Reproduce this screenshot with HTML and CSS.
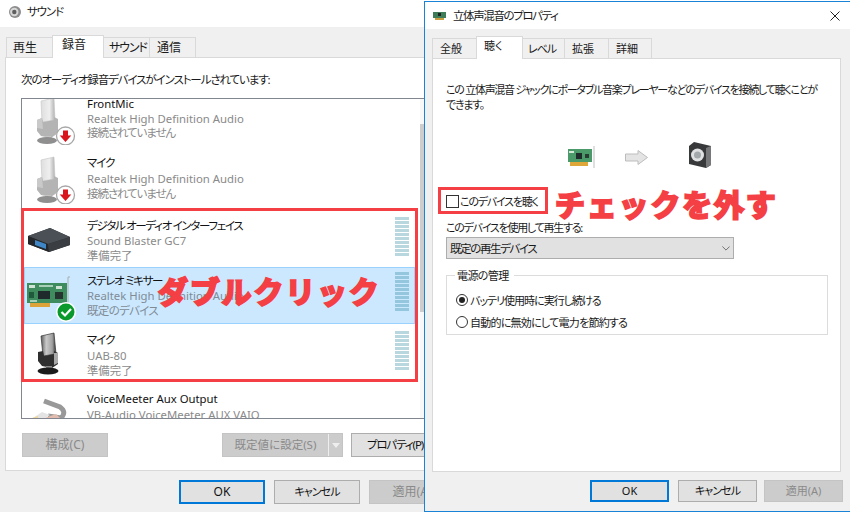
FILE: index.html
```html
<!DOCTYPE html>
<html lang="ja">
<head>
<meta charset="utf-8">
<title>サウンド</title>
<link rel="stylesheet" href="styles.css">
</head>
<body>
<svg class="defs" aria-hidden="true">
  <defs>
    <linearGradient id="capLight" x1="0" x2="1" y1="0" y2="0"><stop offset="0" stop-color="#dedede"/><stop offset=".6" stop-color="#efefef"/><stop offset="1" stop-color="#b0b0b0"/></linearGradient>
    <linearGradient id="capDark" x1="0" x2="1" y1="0" y2="0"><stop offset="0" stop-color="#5a5a5a"/><stop offset=".35" stop-color="#c9c9c9"/><stop offset=".75" stop-color="#a0a0a0"/><stop offset="1" stop-color="#333"/></linearGradient>
    <symbol id="micOff" viewBox="0 0 48 48">
      <path d="M11 4 L24 1 L25 23 L12 25 Z" fill="url(#capLight)" stroke="#c4c4c4" stroke-width=".6"/>
      <path d="M7 23 L12 21 L13 25 L24 23 L24 20 L28 22 L28 36 L21 41 L11 39 L7 34 Z" fill="#b4b4b4"/>
      <path d="M7 23 L12 21 L13 32 L7 31 Z" fill="#c9c9c9"/>
      <rect x="15" y="39" width="6" height="4" fill="#c4c4c4"/>
      <ellipse cx="17" cy="43.500" rx="10" ry="3.500" fill="#8f8f8f"/>
      <circle cx="35.500" cy="39" r="9" fill="#fff" stroke="#a8a8a8" stroke-width="1.300"/>
      <path d="M33 33.500 h5 v5 h3.300 L35.500 45 L29.700 38.500 h3.300 Z" fill="#d8141c"/>
    </symbol>
  </defs>
</svg>

<div class="sound-window">
  <div class="titlebar titlebar-back">
    <svg class="title-icon" viewBox="0 0 14 14" aria-hidden="true">
      <circle cx="7" cy="7" r="6" fill="#8d8d8d"/>
      <circle cx="6.300" cy="7" r="4.200" fill="#d6d6d6"/>
      <circle cx="6.300" cy="7" r="2.200" fill="#5f5f5f"/>
    </svg>
    <span class="tight">サウンド</span>
  </div>
  <div class="tabs tabs-back">
    <div class="tab tab-w47 pad-6">再生</div>
    <div class="tab tab-active tab-w52 pad-9">録音</div>
    <div class="tab tab-w47 pad-5 tight">サウンド</div>
    <div class="tab tab-w47 pad-7">通信</div>
  </div>
  <div class="panel-back">
    <p class="list-caption tight">次のオーディオ録音デバイスがインストールされています:</p>
    <div class="device-list">
      <div class="rows">
        <div class="row row-1">
          <svg class="device-icon" aria-hidden="true"><use href="#micOff"/></svg>
          <div class="device-text"><div>FrontMic</div><div class="sub">Realtek High Definition Audio</div><div class="sub tight">接続されていません</div></div>
        </div>
        <div class="row row-2">
          <svg class="device-icon" aria-hidden="true"><use href="#micOff"/></svg>
          <div class="device-text"><div class="tight">マイク</div><div class="sub">Realtek High Definition Audio</div><div class="sub tight">接続されていません</div></div>
        </div>
        <div class="row row-3">
          <svg class="device-icon" viewBox="0 0 48 48" aria-hidden="true">
            <path d="M-2 18 L20 10 L40 19 L40 27 L19 34 L-2 26 Z" fill="#2e3236"/>
            <path d="M-2 18 L20 10 L40 19 L18 26 Z" fill="#4a5056"/>
            <path d="M-2 18 L18 26 L19 34 L-2 26 Z" fill="#23272b"/>
            <path d="M5 22 L16 26 L16 31 L5 27 Z" fill="#3f86c6"/>
            <path d="M18 26 L40 19 L40 27 L19 34 Z" fill="#3a3e43"/>
          </svg>
          <div class="device-text"><div class="tight name-long">デジタル オーディオ インターフェイス</div><div class="sub">Sound Blaster GC7</div><div class="sub">準備完了</div></div>
          <div class="meter meter-3"><i></i><i></i><i></i><i></i><i></i><i></i><i></i><i></i><i></i><i></i></div>
        </div>
        <div class="row row-4 row-selected">
          <svg class="device-icon" viewBox="0 0 48 48" aria-hidden="true">
            <path d="M38 6 h2 M38 6 v30" stroke="#a9aeb0" stroke-width="1" fill="none"/>
            <rect x="-3" y="12" width="40" height="20" fill="#3f8d5e"/>
            <rect x="8" y="20" width="12" height="8" fill="#1e2a2c"/>
            <rect x="25" y="21" width="8" height="7" fill="#26342f"/>
            <rect x="-1" y="14" width="6" height="3" fill="#cfe3d5"/>
            <rect x="9" y="14" width="14" height="2" fill="#a8d0b8"/>
            <rect x="26" y="15" width="6" height="3" fill="#cfe3d5"/>
            <rect x="-1" y="21" width="5" height="6" fill="#1f5a3c"/>
            <rect x="0" y="29" width="7" height="2" fill="#a8d0b8"/>
            <rect x="0" y="32" width="20" height="4" fill="#dca33a"/>
            <circle cx="36" cy="41" r="10" fill="#fff"/>
            <circle cx="36" cy="41" r="8.500" fill="#0a9a2c"/>
            <path d="M31.500 41 L35 44.500 L41 38" stroke="#fff" stroke-width="2.200" fill="none"/>
          </svg>
          <div class="device-text"><div class="tight name-long">ステレオ ミキサー</div><div class="sub">Realtek High Definition Audio</div><div class="sub tight-soft">既定のデバイス</div></div>
          <div class="meter meter-4"><i></i><i></i><i></i><i></i><i></i><i></i><i></i><i></i><i></i><i></i></div>
        </div>
        <div class="row row-5">
          <svg class="device-icon" viewBox="0 0 48 48" aria-hidden="true">
            <path d="M11 7 L24 4 L26 25 L13 27 Z" fill="url(#capDark)" stroke="#333" stroke-width=".7"/>
            <path d="M8 23 L13 22 L14 27 L24 25 L24 22 L28 24 L28 35 L22 39 L12 37 L8 32 Z" fill="#2f2f2f"/>
            <path d="M24 24 L28 24 L28 34 L24 36 Z" fill="#a9a9a9"/>
            <rect x="16" y="37" width="6" height="4" fill="#8a8a8a"/>
            <ellipse cx="18" cy="42" rx="10.500" ry="3.500" fill="#1b1b1b"/>
          </svg>
          <div class="device-text"><div class="tight">マイク</div><div class="sub">UAB-80</div><div class="sub">準備完了</div></div>
          <div class="meter meter-5"><i></i><i></i><i></i><i></i><i></i><i></i><i></i><i></i><i></i><i></i></div>
        </div>
        <div class="row row-6">
          <svg class="device-icon" viewBox="0 0 48 48" aria-hidden="true">
            <path d="M14 13 L30 19 Q37 24 31 30 L18 28" stroke="#999" stroke-width="5" fill="none"/>
            <path d="M0 32 L12 24 L20 27 L10 33 Z" fill="#e4e4e4"/>
            <path d="M12 31 L26 26 L32 32 Z" fill="#e2bcae"/>
            <path d="M-1 31 L8 28 L8 33 Z" fill="#eed79a"/>
          </svg>
          <div class="device-text"><div>VoiceMeeter Aux Output</div><div class="sub">VB-Audio VoiceMeeter AUX VAIO</div></div>
        </div>
      </div>
      <div class="scrollbar"><div class="thumb"></div></div>
    </div>
    <div class="panel-actions">
      <div class="btn btn-off btn-config">構成(C)</div>
      <div class="btn btn-off btn-default"><span class="btn-default-label">既定値に設定(S)</span><span class="btn-caret"></span></div>
      <div class="btn btn-prop"><span class="tight">プロパティ(P)</span></div>
    </div>
  </div>
  <div class="footer-back">
    <div class="btn btn-primary">OK</div>
    <div class="btn"><span class="tight-more">キャンセル</span></div>
    <div class="btn btn-off">適用(A)</div>
  </div>
</div>

<div class="annot-box annot-box-list"></div>
<div class="annot-text annot-text-list">ダブルクリック</div>

<div class="prop-window">
  <div class="titlebar titlebar-prop">
    <svg class="title-icon-card" viewBox="0 0 14 10" aria-hidden="true">
      <rect x="0" y="1" width="13" height="6" fill="#3f7d58"/>
      <rect x="5" y="2" width="3" height="3" fill="#1b2524"/>
      <rect x="2" y="7" width="9" height="2" fill="#c89b3c"/>
    </svg>
    <span class="prop-title">立体声混音のプロパティ</span>
    <svg class="close-x" viewBox="0 0 10 10" aria-hidden="true"><path d="M.5 .5 L9.500 9.500 M9.500 .5 L.5 9.500" stroke="#222" stroke-width="1" fill="none"/></svg>
  </div>
  <div class="tabs tabs-prop">
    <div class="tab tab-w45 pad-7">全般</div>
    <div class="tab tab-active tab-w47 pad-7">聴く</div>
    <div class="tab tab-w43 pad-5 prop-tab-kana">レベル</div>
    <div class="tab tab-w45 pad-7">拡張</div>
    <div class="tab tab-w44 pad-7">詳細</div>
  </div>
  <div class="panel-prop">
    <p class="prop-desc">この 立体声混音 ジャックにポータブル音楽プレーヤーなどのデバイスを接続して聴くことが<br>できます。</p>
    <div class="flow-icons">
      <svg class="flow-card" viewBox="0 0 27 22" aria-hidden="true">
        <path d="M26 0 V22" stroke="#c8cccc" stroke-width="1.200"/>
        <rect x="0" y="3" width="24" height="13" fill="#4a9a6a"/>
        <rect x="8" y="7" width="6" height="6" fill="#1f2c2c"/>
        <rect x="1" y="5" width="5" height="2" fill="#d5e7da"/>
        <rect x="17" y="8" width="4" height="4" fill="#2a3b34"/>
        <rect x="2" y="16" width="18" height="4" fill="#dea738"/>
      </svg>
      <svg class="flow-arrow" viewBox="0 0 23 15" aria-hidden="true">
        <path d="M.5 4 H13 V.5 L22.500 7.500 L13 14.500 V11 H.5 Z" fill="#e4e4e4" stroke="#bdbdbd"/>
      </svg>
      <svg class="flow-speaker" viewBox="0 0 24 26" aria-hidden="true">
        <path d="M1 4 L6 0 L23 4 V23 L18 26 L1 22 Z" fill="#38393b"/>
        <path d="M18 6 L23 4 V23 L18 26 Z" fill="#77787a"/>
        <circle cx="9.500" cy="13" r="6.500" fill="#dfe1e2"/>
        <circle cx="9.500" cy="13" r="3.500" fill="#a3a8ab"/>
      </svg>
    </div>
    <label class="check-row"><span class="checkbox"></span><span>このデバイスを聴く</span></label>
    <div class="select-label">このデバイスを使用して再生する:</div>
    <div class="select">
      <span>既定の再生デバイス</span>
      <svg class="select-chevron" viewBox="0 0 10 6" aria-hidden="true"><path d="M.5 .5 L5 5 L9.500 .5" stroke="#555" fill="none"/></svg>
    </div>
    <fieldset class="power-group">
      <legend>電源の管理</legend>
      <div class="radio-row radio-row-a"><span class="radio radio-on"></span><span>バッテリ使用時に実行し続ける</span></div>
      <div class="radio-row radio-row-b"><span class="radio"></span><span>自動的に無効にして電力を節約する</span></div>
    </fieldset>
  </div>
  <div class="footer-prop">
    <div class="btn btn-primary btn-small">OK</div>
    <div class="btn btn-small"><span class="tight-more">キャンセル</span></div>
    <div class="btn btn-off btn-small">適用(A)</div>
  </div>
  <div class="annot-box annot-box-check"></div>
  <div class="annot-text annot-text-check">チェックを外す</div>
</div>
</body>
</html>
```

FILE: styles.css
```css
* { box-sizing: border-box; }
html, body { margin: 0; padding: 0; }
body {
  position: relative;
  width: 850px;
  height: 512px;
  overflow: hidden;
  background: #f0f0f0;
  color: #1a1a1a;
  font: 12px/15px "Noto Sans", "Noto Sans CJK JP", sans-serif;
  font-feature-settings: "palt";
}
.defs { position: absolute; width: 0; height: 0; }
p { margin: 0; }
.tight { font-size: 11.5px; letter-spacing: -1.1px; }
.tight-soft { font-size: 11.5px; letter-spacing: -.7px; }
.tight-more { font-size: 11px; letter-spacing: -.9px; }

/* back window */
.sound-window { width: 850px; height: 512px; background: #f0f0f0; }
.titlebar {
  height: 27px;
  background: #fff;
  display: flex;
  align-items: center;
  padding-left: 8px;
  font-size: 12px;
}
.titlebar-back { padding-bottom: 4px; }
.title-icon { width: 14px; height: 14px; margin-right: 5px; }
.tabs { display: flex; align-items: flex-end; }
.tabs-back { padding-left: 7px; height: 30px; }
.tab {
  height: 20px;
  line-height: 20px;
  text-align: left;
  background: #f0f0f0;
  border: 1px solid #d9d9d9;
  border-bottom: 0;
  margin-left: -1px;
  font-size: 12px;
  white-space: nowrap;
}
.tab-active {
  height: 23px;
  line-height: 18px;
  background: #fff;
  position: relative;
  margin-bottom: -1px;
}
.tab-w47 { width: 47px; }
.tab-w52 { width: 52px; }
.tab-w45 { width: 45px; }
.tab-w43 { width: 43px; }
.tab-w44 { width: 44px; }
.pad-5 { padding-left: 5px; }
.pad-6 { padding-left: 6px; }
.pad-7 { padding-left: 7px; }
.pad-9 { padding-left: 9px; }

.panel-back {
  margin-left: 5px;
  height: 414px;
  width: 845px;
  background: #fff;
  border: 1px solid #d9d9d9;
  padding: 14px 0 0 15px;
}
.list-caption { height: 26px; }
.device-list {
  width: 430px;
  height: 321px;
  border: 1px solid #82868f;
  display: flex;
  overflow: hidden;
}
.rows { width: 398px; margin-top: -9px; flex: none; }
.row { display: flex; align-items: flex-start; padding: 7px 11px 0 8px; }
.row-1 { height: 59px; }
.row-2 { height: 59px; }
.row-3 { height: 59px; padding-top: 11px; }
.row-4 { height: 57px; }
.row-5 { height: 59px; padding-top: 8px; }
.row-6 { height: 60px; padding-top: 8px; }
.row-selected {
  background: #cce8ff;
  border: 1px solid #99d1ff;
  margin: 0 5px 0 2px;
  padding: 6px 5px 0 5px;
}
.device-icon { width: 48px; height: 48px; flex: none; overflow: visible; margin-right: 9px; }
.row-3 .device-icon { margin-top: -1px; }
.row-4 .device-icon, .row-5 .device-icon, .row-6 .device-icon { margin-top: -3px; }
.device-text { line-height: 15px; color: #111; white-space: nowrap; font-size: 11.35px; }
.device-text div { height: 15px; margin-bottom: .5px; }
.row-1 .device-text, .row-2 .device-text, .row-3 .device-text, .row-4 .device-text { margin-top: -1px; }
.row-1 .device-text div { margin-bottom: -.5px; }
.row-3 .device-text div, .row-4 .device-text div { margin-bottom: 0; }
.name-long { letter-spacing: -1.3px; }
.sub { color: #8a8a8a; }
.row-selected .sub { color: #7f8c96; }
.meter { margin-left: auto; width: 14px; display: flex; flex-direction: column; gap: 1px; }
.meter i { display: block; height: 3px; background: #b9d7de; }
.meter-3, .meter-4 { margin-top: -2px; }
.meter-4 i { background: #94c7de; }
.meter-5 { margin-top: -1px; }
.scrollbar { width: 17px; background: #f8f8f8; flex: none; }
.thumb { margin-top: 25px; height: 188px; background: #cdcdcd; }

.panel-actions { display: flex; margin-top: 14px; margin-left: 1px; }
.btn {
  width: 86px;
  height: 24px;
  background: #e1e1e1;
  border: 1px solid #adadad;
  color: #111;
  line-height: 22px;
  text-align: center;
  font-size: 12px;
  flex: none;
  white-space: nowrap;
}
.btn-off { background: #cccccc; border-color: #c4c4c4; color: #8a8a8a; }
.btn-config { margin-right: 114px; }
.btn-default { width: 121px; margin-right: 8px; display: flex; font-size: 11.5px; }
.btn-default-label { width: 106px; border-right: 1px solid #eee; }
.btn-caret {
  margin: 9px 0 0 3px;
  width: 0; height: 0;
  border: 4px solid transparent;
  border-top: 5px solid #eee;
}
.btn-prop { width: 88px; }
.footer-back { display: flex; gap: 9px; padding: 9px 0 0 179px; }
.btn-primary { border: 2px solid #0078d7; line-height: 20px; }

/* front window */
.prop-window {
  position: absolute;
  left: 424px;
  top: 1px;
  width: 426px;
  height: 511px;
  background: #f0f0f0;
  border: 1px solid #1883d7;
  border-right: 0;
  font-size: 11px;
}
.titlebar-prop { padding-left: 8px; }
.prop-title { font-size: 11.5px; letter-spacing: -1.4px; }
.title-icon-card { width: 14px; height: 10px; margin-right: 6px; }
.close-x { width: 10px; height: 10px; margin-left: auto; margin-right: 10px; }
.tabs-prop { padding-left: 8px; height: 29px; }
.tabs-prop .tab { font-size: 11px; }
.prop-tab-kana { letter-spacing: -1px; }
.panel-prop {
  margin-left: 7px;
  width: 409px;
  height: 414px;
  background: #fff;
  border: 1px solid #d9d9d9;
  padding: 23px 13px 0 13px;
}
.prop-desc { white-space: nowrap; line-height: 15px; letter-spacing: -1.27px; }
.flow-icons { display: flex; align-items: flex-start; margin: 30px 0 0 122px; height: 52px; }
.flow-card { width: 27px; height: 22px; margin-top: 4px; }
.flow-arrow { width: 23px; height: 15px; margin: 8px 0 0 30px; }
.flow-speaker { width: 24px; height: 26px; margin: 0 0 0 40px; }
.check-row { display: flex; align-items: center; height: 15px; letter-spacing: -1.2px; }
.checkbox { width: 13px; height: 13px; border: 1px solid #333; background: #fff; margin-right: 1px; }
.select-label { margin-top: 11px; letter-spacing: -1.25px; }
.select {
  margin-top: 2px;
  width: 288px;
  height: 22px;
  background: #e1e1e1;
  border: 1px solid #adadad;
  display: flex;
  align-items: center;
  padding: 0 3px 0 3px;
  font-size: 11.5px;
  letter-spacing: -1.4px;
}
.select-chevron { width: 8px; height: 5px; margin-left: auto; }
.power-group {
  margin: 9px 0 0;
  padding: 6px 0 0 9px;
  width: 382px;
  height: 67px;
  border: 1px solid #dcdcdc;
}
.power-group legend { padding: 0 5px 0 2px; margin-left: -1px; line-height: 15px; letter-spacing: -.6px; }
.radio-row { display: flex; align-items: center; height: 22px; }
.radio-row-a { letter-spacing: -1px; }
.radio-row-b { letter-spacing: -.75px; }
.radio {
  width: 12px; height: 12px;
  border: 1px solid #333;
  border-radius: 50%;
  margin-right: 2px;
  position: relative;
}
.radio-on::after {
  content: "";
  position: absolute;
  left: 2px; top: 2px;
  width: 6px; height: 6px;
  border-radius: 50%;
  background: #222;
}
.footer-prop { display: flex; gap: 9px; padding: 8px 0 0 165px; }
.btn-small { width: 79px; height: 22px; line-height: 20px; font-size: 11px; }
.footer-prop .btn-off { margin-left: -2px; }
.footer-prop .btn-primary { line-height: 18px; }

/* annotations */
.annot-box { position: absolute; border: 3px solid #f43f45; }
.annot-box-list { left: 21px; top: 208px; width: 397px; height: 174px; }
.annot-box-check { left: 13px; top: 185px; width: 110px; height: 27px; }
.annot-text {
  position: absolute;
  color: #f43f45;
  font: 700 30px/36px "Noto Sans CJK JP", sans-serif;
  font-feature-settings: normal;
  letter-spacing: 1.8px;
  -webkit-text-stroke: 2.2px #f43f45;
  white-space: nowrap;
}
.annot-text-list { left: 158px; top: 272px; }
.annot-text-check { left: 130px; top: 183px; }
```
